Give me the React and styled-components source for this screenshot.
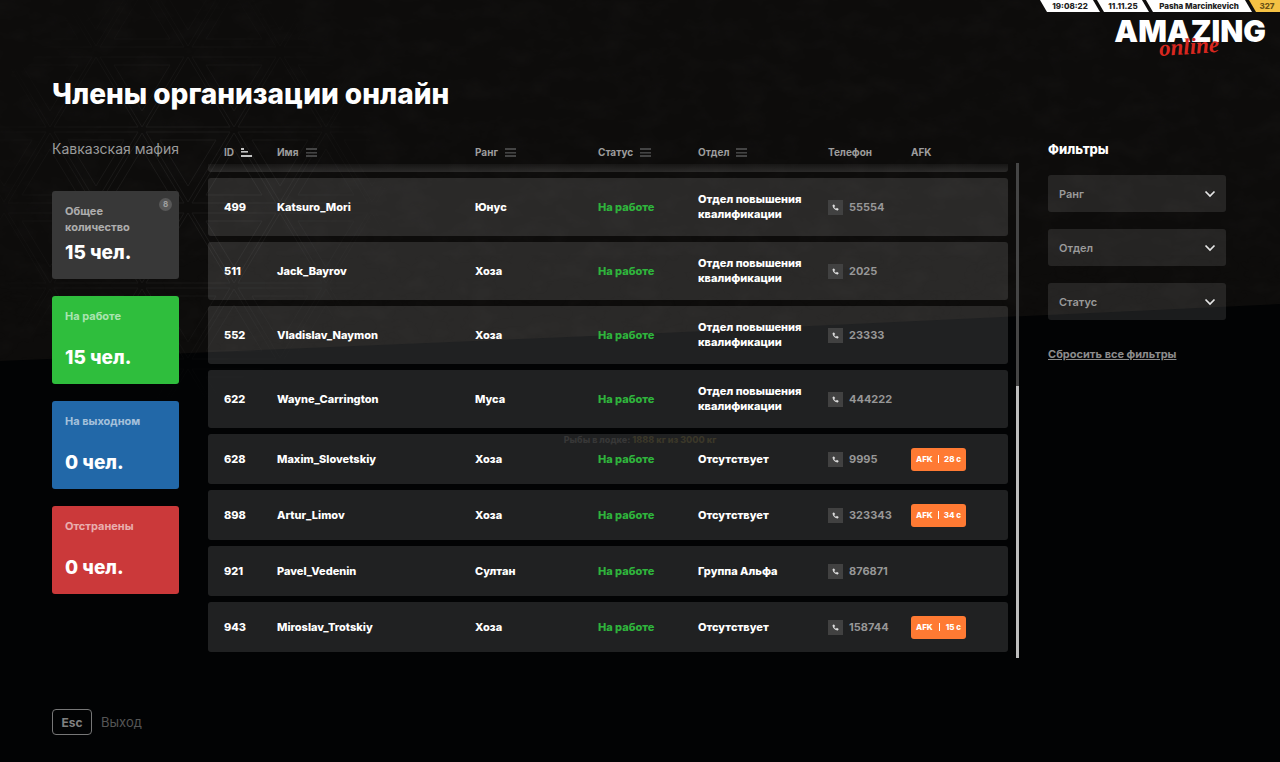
import React, { useState } from "react";
import styled, { createGlobalStyle } from "styled-components";

const stats = [
  { label: "Общее количество", value: "15 чел.", color: "#383838", badge: "8" },
  { label: "На работе", value: "15 чел.", color: "#2fbe3d" },
  { label: "На выходном", value: "0 чел.", color: "#2268a8" },
  { label: "Отстранены", value: "0 чел.", color: "#cb393a" },
];

const training = "Отдел повышения квалификации";

const members = [
  { id: 499, name: "Katsuro_Mori", rank: "Юнус", department: training, phone: "55554" },
  { id: 511, name: "Jack_Bayrov", rank: "Хоза", department: training, phone: "2025" },
  { id: 552, name: "Vladislav_Naymon", rank: "Хоза", department: training, phone: "23333" },
  { id: 622, name: "Wayne_Carrington", rank: "Муса", department: training, phone: "444222" },
  { id: 628, name: "Maxim_Slovetskiy", rank: "Хоза", department: "Отсутствует", phone: "9995", afk: "28 с" },
  { id: 898, name: "Artur_Limov", rank: "Хоза", department: "Отсутствует", phone: "323343", afk: "34 с" },
  { id: 921, name: "Pavel_Vedenin", rank: "Султан", department: "Группа Альфа", phone: "876871" },
  { id: 943, name: "Miroslav_Trotskiy", rank: "Хоза", department: "Отсутствует", phone: "158744", afk: "15 с" },
];

const columns = [
  { key: "id", label: "ID", width: "69px", sortable: true },
  { key: "name", label: "Имя", sortable: true },
  { key: "rank", label: "Ранг", width: "123px", sortable: true },
  { key: "status", label: "Статус", width: "100px", sortable: true },
  { key: "department", label: "Отдел", width: "130px", sortable: true },
  { key: "phone", label: "Телефон", width: "83px" },
  { key: "afk", label: "AFK", width: "97px" },
];

const filters = [
  { id: "rank", label: "Ранг", options: ["Юнус", "Хоза", "Муса", "Султан"] },
  { id: "department", label: "Отдел", options: [training, "Группа Альфа"] },
  { id: "status", label: "Статус", options: ["На работе", "На выходном"] },
];

function SortIcon({ active }) {
  return (
    <svg width="11" height="9" viewBox="0 0 11 9" fill={active ? "#c4c4c4" : "#444"}>
      <rect width={active ? 3 : 11} height="2" />
      <rect y={active ? 3 : 4} width={active ? 7 : 11} height="1.6" />
      <rect y="7" width="11" height="2" />
    </svg>
  );
}

function PhoneIcon() {
  return (
    <svg width="7" height="7" viewBox="0 0 24 24" fill="#dedede" stroke="#dedede" strokeWidth="2">
      <path d="M6.62 10.79c1.44 2.83 3.76 5.14 6.59 6.59l2.2-2.2c.27-.27.67-.36 1.02-.24 1.12.37 2.33.57 3.57.57.55 0 1 .45 1 1V20c0 .55-.45 1-1 1-9.39 0-17-7.61-17-17 0-.55.45-1 1-1h3.5c.55 0 1 .45 1 1 0 1.25.2 2.45.57 3.57.11.35.03.74-.25 1.02l-2.2 2.2z" />
    </svg>
  );
}

function Scene() {
  return (
    <Backdrop aria-hidden="true">
      <svg width="100%" height="100%" viewBox="0 0 1280 762" preserveAspectRatio="none">
        <defs>
          <filter id="rock" x="0" y="0" width="100%" height="100%">
            <feTurbulence type="fractalNoise" baseFrequency="0.03 0.05" numOctaves="4" seed="4" />
            <feColorMatrix values="0 0 0 0 0.5  0 0 0 0 0.46  0 0 0 0 0.44  0.16 0 0 0 -0.06" />
          </filter>
          <pattern
            id="triangles"
            x="4"
            y="-25"
            width="92"
            height="156"
            patternUnits="userSpaceOnUse"
          >
            <g fill="none" stroke="#fff" strokeWidth="1">
              <path d="M4 72 46 2l42 70zM18 64 46 18l28 46z" />
              <path d="M50 1h84L92 71zM-42 1h84L0 71zM64 9h56L92 55zM-28 9h56L0 55z" />
              <path d="M-42 152 0 82l42 70zM50 152 92 82l42 70zM4 82h84l-42 70zM18 90h56l-28 46z" />
            </g>
          </pattern>
          <radialGradient id="fade" cx="180" cy="190" r="220" gradientUnits="userSpaceOnUse">
            <stop offset="0.3" stopColor="#fff" />
            <stop offset="1" stopColor="#000" />
          </radialGradient>
          <mask id="spot">
            <rect width="450" height="420" fill="url(#fade)" />
          </mask>
          <clipPath id="wall">
            <path d="M0 0h1280v304L640 334 0 361z" />
          </clipPath>
        </defs>
        <rect width="1280" height="762" fill="#020304" />
        <path d="M0 0h1280v304L640 334 0 361z" fill="#0d0c0b" />
        <g clipPath="url(#wall)">
          <rect width="1280" height="370" filter="url(#rock)" opacity="0.3" />
        </g>
        <rect width="450" height="420" fill="url(#triangles)" mask="url(#spot)" opacity="0.05" />
      </svg>
      <BoatHint>
        Рыбы в лодке: <span>1888 кг из 3000 кг</span>
      </BoatHint>
    </Backdrop>
  );
}

function MemberRow({ member }) {
  return (
    <Row $tall={member.department === training}>
      <td>{member.id}</td>
      <td>{member.name}</td>
      <td>{member.rank}</td>
      <StatusCell>На работе</StatusCell>
      <td>{member.department}</td>
      <td>
        <Phone>
          <PhoneBox>
            <PhoneIcon />
          </PhoneBox>
          {member.phone}
        </Phone>
      </td>
      <td>
        {member.afk && (
          <AfkBadge>
            <span>AFK</span>
            <AfkDivider />
            <span>{member.afk}</span>
          </AfkBadge>
        )}
      </td>
    </Row>
  );
}

function App() {
  const [selected, setSelected] = useState({});
  const [sortBy, setSortBy] = useState("id");

  const sorted = [...members].sort((a, b) => {
    const left = a[sortBy] || "";
    const right = b[sortBy] || "";
    return left > right ? 1 : left < right ? -1 : 0;
  });

  return (
    <Page>
      <GlobalStyle />
      <Scene />

      <TopBar>
        <TopCell $width="60px">19:08:22</TopCell>
        <TopCell $width="52px">11.11.25</TopCell>
        <TopCell $width="106px">Pasha Marcinkevich</TopCell>
        <TopCell $width="31px" $gold>
          327
        </TopCell>
      </TopBar>

      <Logo>
        AMAZING
        <LogoScript>online</LogoScript>
      </Logo>

      <Title>Члены организации онлайн</Title>

      <Content>
        <Sidebar>
          <OrgName>Кавказская мафия</OrgName>
          {stats.map((stat) => (
            <StatCard key={stat.label} $color={stat.color}>
              <StatLabel>{stat.label}</StatLabel>
              <StatValue>{stat.value}</StatValue>
              {stat.badge && <StatBadge>{stat.badge}</StatBadge>}
            </StatCard>
          ))}
        </Sidebar>

        <List>
          <Table>
            <colgroup>
              {columns.map((column) => (
                <Column key={column.key} $width={column.width} />
              ))}
            </colgroup>
            <thead>
              <tr>
                {columns.map((column) => (
                  <HeadCell key={column.key}>
                    {column.sortable ? (
                      <SortButton onClick={() => setSortBy(column.key)}>
                        {column.label}
                        <SortIcon active={sortBy === column.key} />
                      </SortButton>
                    ) : (
                      column.label
                    )}
                  </HeadCell>
                ))}
              </tr>
            </thead>
            <tbody>
              <PeekRow aria-hidden="true">
                <td colSpan={columns.length} />
              </PeekRow>
              {sorted.map((member) => (
                <MemberRow key={member.id} member={member} />
              ))}
            </tbody>
          </Table>
          <ScrollTrack>
            <ScrollThumb />
          </ScrollTrack>
        </List>

        <Filters>
          <FiltersTitle>Фильтры</FiltersTitle>
          {filters.map((filter) => (
            <SelectBox key={filter.id}>
              <Select
                aria-label={filter.label}
                value={selected[filter.id] || ""}
                onChange={(e) => setSelected({ ...selected, [filter.id]: e.target.value })}
              >
                <option value="">{filter.label}</option>
                {filter.options.map((option) => (
                  <option key={option}>{option}</option>
                ))}
              </Select>
              <Chevron width="12" height="8" viewBox="0 0 12 8">
                <path d="M1.5 1.5l4.5 4.5 4.5-4.5" fill="none" stroke="#e6e6e6" strokeWidth="1.7" />
              </Chevron>
            </SelectBox>
          ))}
          <ResetButton onClick={() => setSelected({})}>Сбросить все фильтры</ResetButton>
        </Filters>
      </Content>

      <Footer>
        <EscKey>Esc</EscKey>
        Выход
      </Footer>
    </Page>
  );
}

const GlobalStyle = createGlobalStyle`
  * {
    box-sizing: border-box;
  }

  body {
    margin: 0;
    background: #020304;
    color: #fff;
    font-family: Inter, "Noto Sans", sans-serif;
  }

  button,
  select {
    font-family: inherit;
  }
`;

const Page = styled.div`
  position: relative;
  min-height: 100vh;
  overflow: hidden;
  display: flex;
  flex-direction: column;
  isolation: isolate;
`;

const Backdrop = styled.div`
  position: absolute;
  inset: 0;
  z-index: -1;

  svg {
    display: block;
  }
`;

const BoatHint = styled.div`
  position: absolute;
  top: 434px;
  left: 0;
  right: 0;
  text-align: center;
  color: #1c1c1c;
  font-size: 9px;
  line-height: 12px;
  font-weight: 800;

  span {
    color: #201d0c;
  }
`;

const TopBar = styled.div`
  display: flex;
  justify-content: flex-end;
  height: 12px;
`;

const TopCell = styled.div`
  width: ${(props) => props.$width};
  margin-left: -3px;
  padding-left: ${(props) => (props.$gold ? "5px" : "0")};
  background: ${(props) => (props.$gold ? "#f5c244" : "#fff")};
  color: ${(props) => (props.$gold ? "#6b5216" : "#222")};
  clip-path: ${(props) =>
    props.$gold
      ? "polygon(0 0, 100% 0, 100% 100%, 7px 100%)"
      : "polygon(0 0, calc(100% - 7px) 0, 100% 100%, 7px 100%)"};
  font-size: 8px;
  line-height: 13px;
  font-weight: 800;
  text-align: center;
  white-space: nowrap;
`;

const Logo = styled.div`
  position: relative;
  align-self: flex-end;
  margin: 6px 14px 0 0;
  font-size: 30px;
  line-height: 26px;
  font-weight: 900;
`;

const LogoScript = styled.span`
  position: absolute;
  top: 16px;
  left: 45px;
  color: #d8271f;
  font-family: "Liberation Serif", serif;
  font-size: 23px;
  font-weight: 700;
  font-style: italic;
  transform: rotate(-4deg);
`;

const Title = styled.h1`
  margin: 32px 52px 0;
  font-size: 28px;
  line-height: 36px;
  font-weight: 800;
`;

const Content = styled.main`
  display: grid;
  grid-template-columns: 127px 1fr 178px;
  column-gap: 29px;
  align-items: start;
  margin: 28px 54px 0 52px;
`;

const Sidebar = styled.aside`
  display: flex;
  flex-direction: column;
  gap: 17px;
`;

const OrgName = styled.div`
  margin-bottom: 16px;
  color: #9b9b9b;
  font-size: 14px;
  line-height: 18px;
  white-space: nowrap;
`;

const StatCard = styled.section`
  position: relative;
  display: flex;
  flex-direction: column;
  justify-content: space-between;
  height: 88px;
  padding: 12px 13px 14px;
  border-radius: 3px;
  background: ${(props) => props.$color};
`;

const StatLabel = styled.div`
  padding-right: 20px;
  color: rgba(255, 255, 255, 0.6);
  font-size: 11px;
  line-height: 16px;
  font-weight: 700;
`;

const StatValue = styled.div`
  font-size: 19px;
  line-height: 24px;
  font-weight: 800;
`;

const StatBadge = styled.span`
  position: absolute;
  top: 7px;
  right: 7px;
  width: 13px;
  height: 13px;
  border-radius: 50%;
  background: #585858;
  color: #a0a0a0;
  font-size: 8px;
  line-height: 13px;
  font-weight: 700;
  text-align: center;
`;

const List = styled.div`
  display: flex;
  align-items: stretch;
  gap: 8px;
`;

const Table = styled.table`
  flex: 1;
  table-layout: fixed;
  width: 100%;
  border-spacing: 0 6px;
  font-size: 11px;
  line-height: 15px;
  font-weight: 800;

  td,
  th {
    padding: 0;
    text-align: left;
  }

  td:first-child,
  th:first-child {
    padding-left: 16px;
  }
`;

const Column = styled.col`
  width: ${(props) => props.$width || "auto"};
`;

const HeadCell = styled.th`
  height: 12px;
  color: #9d9d9d;
  font-size: 10px;
  line-height: 12px;
  font-weight: 700;
`;

const SortButton = styled.button`
  display: flex;
  align-items: center;
  gap: 7px;
  padding: 0;
  border: none;
  background: none;
  color: inherit;
  font-size: 10px;
  line-height: 12px;
  font-weight: 700;
  cursor: pointer;
`;

const PeekRow = styled.tr`
  td {
    height: 8px;
    border-radius: 0 0 3px 3px;
    background: linear-gradient(rgba(255, 255, 255, 0.04), rgba(255, 255, 255, 0.12));
  }
`;

const Row = styled.tr`
  height: ${(props) => (props.$tall ? "58px" : "50px")};

  td {
    background: rgba(255, 255, 255, 0.12);
  }

  td:first-child {
    border-radius: 3px 0 0 3px;
  }

  td:last-child {
    border-radius: 0 3px 3px 0;
  }
`;

const StatusCell = styled.td`
  color: #2fb43c;
`;

const Phone = styled.div`
  display: flex;
  align-items: center;
  gap: 6px;
  color: #979797;
  font-weight: 700;
`;

const PhoneBox = styled.span`
  display: flex;
  align-items: center;
  justify-content: center;
  width: 15px;
  height: 15px;
  background: #414141;
`;

const AfkBadge = styled.div`
  display: flex;
  align-items: center;
  justify-content: space-between;
  width: 55px;
  height: 23px;
  padding: 0 5px;
  border-radius: 3px;
  background: #ff7a33;
  font-size: 8px;
  font-weight: 800;
  white-space: nowrap;
`;

const AfkDivider = styled.i`
  width: 1px;
  height: 8px;
  background: #fff;
`;

const ScrollTrack = styled.div`
  width: 3px;
  margin-top: 23px;
  display: flex;
  align-items: flex-end;
  background: #454545;
`;

const ScrollThumb = styled.div`
  width: 100%;
  height: 55%;
  background: #bdbdbd;
`;

const Filters = styled.aside`
  display: flex;
  flex-direction: column;
  gap: 17px;
`;

const FiltersTitle = styled.h2`
  margin: 0;
  font-size: 13px;
  line-height: 18px;
  font-weight: 800;
`;

const SelectBox = styled.div`
  position: relative;
`;

const Select = styled.select`
  appearance: none;
  display: block;
  width: 100%;
  height: 37px;
  padding: 0 11px;
  border: none;
  border-radius: 3px;
  background: rgba(255, 255, 255, 0.1);
  color: #9a9a9a;
  font-size: 11px;
  font-weight: 600;

  option {
    background: #222;
  }
`;

const Chevron = styled.svg`
  position: absolute;
  top: 15px;
  right: 10px;
  pointer-events: none;
`;

const ResetButton = styled.button`
  align-self: flex-start;
  margin-top: 8px;
  padding: 0;
  border: none;
  background: none;
  color: #8c8c8c;
  font-size: 11px;
  line-height: 18px;
  font-weight: 700;
  text-decoration: underline;
  white-space: nowrap;
  cursor: pointer;
`;

const Footer = styled.footer`
  display: flex;
  align-items: center;
  gap: 9px;
  margin: 51px 52px 27px;
  color: #555;
  font-size: 13px;
`;

const EscKey = styled.button`
  width: 40px;
  height: 26px;
  padding: 0;
  border: 1px solid #777;
  border-radius: 4px;
  background: none;
  color: #808080;
  font-size: 12px;
  font-weight: 700;
`;

export default App;
